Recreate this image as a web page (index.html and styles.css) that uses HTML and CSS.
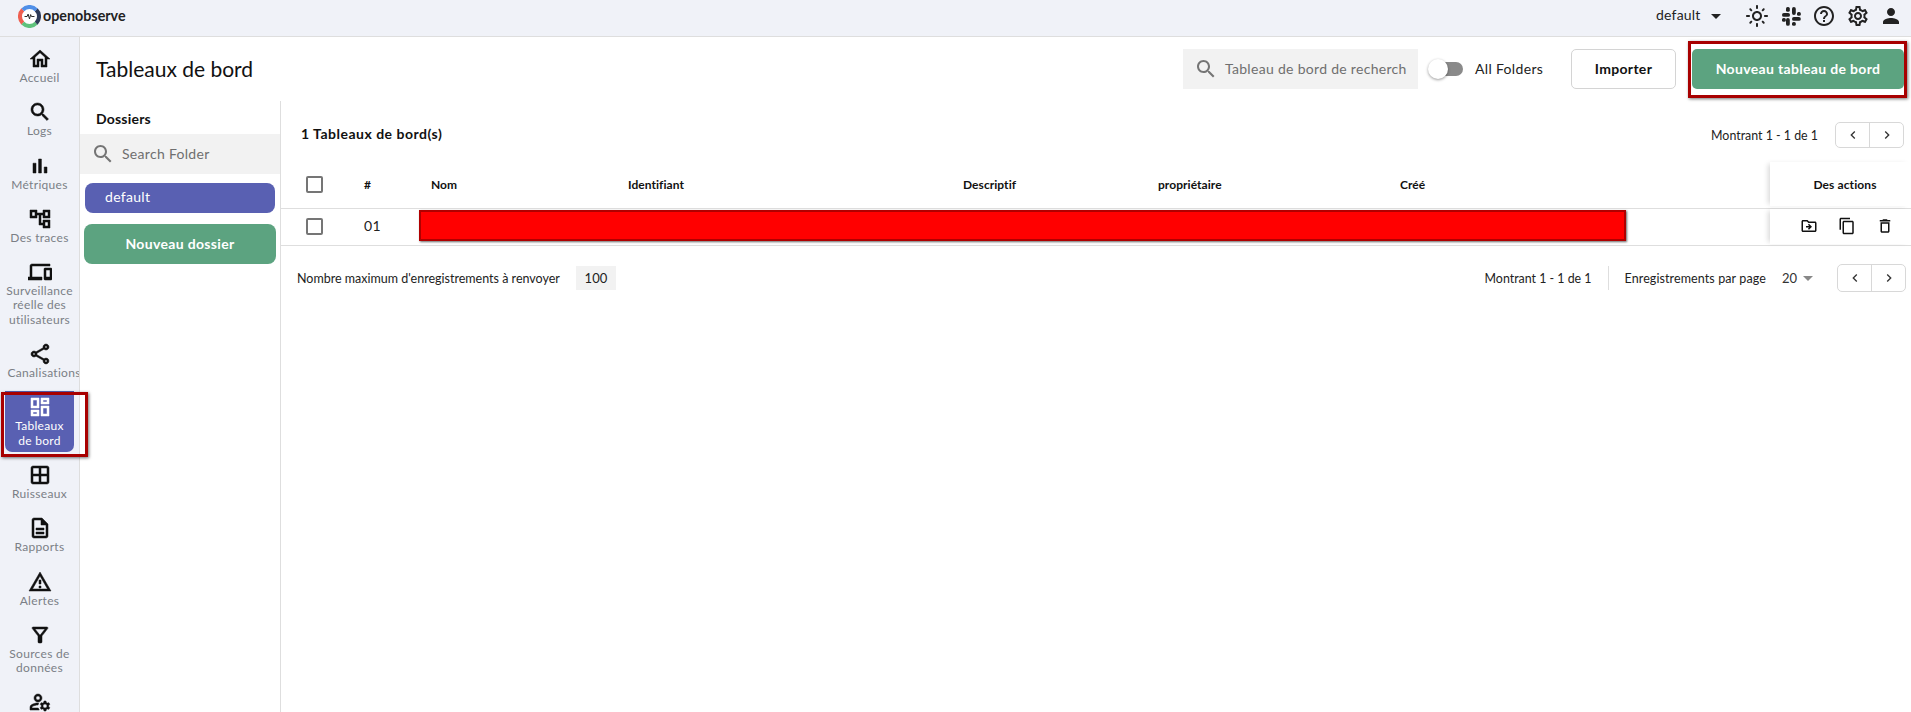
FILE: index.html
```html
<!DOCTYPE html>
<html lang="fr">
<head>
<meta charset="utf-8">
<title>Tableaux de bord</title>
<link rel="stylesheet" href="styles.css">
</head>
<body>
<header class="topbar">
  <div class="logo">
    <svg class="logo-mark" viewBox="0 0 24 24" width="24" height="24">
      <circle cx="12" cy="12" r="9.8" fill="#fff"/>
      <path d="M5 5A9.8 9.8 0 0 0 5 19" fill="none" stroke="#ef5f50" stroke-width="4.2"/>
      <path d="M5 19A9.8 9.8 0 0 0 19 19" fill="none" stroke="#5ec27c" stroke-width="4.2"/>
      <path d="M19 19A9.8 9.8 0 0 0 19 5" fill="none" stroke="#2d3a57" stroke-width="4.2"/>
      <path d="M19 5A9.8 9.8 0 0 0 5 5" fill="none" stroke="#4f8fe8" stroke-width="4.2"/>
      <path d="M6.8 12H9.5L10.5 9.5L12 14.5L13.2 10L14 12H17.2" fill="none" stroke="#222" stroke-width="1"/>
    </svg>
    <span class="logo-text">openobserve</span>
  </div>
  <div class="top-right">
    <span class="org">default</span>
    <span class="caret"></span>
    <svg class="ti sun" viewBox="0 0 24 24"><path d="M12 9c1.65 0 3 1.35 3 3s-1.35 3-3 3-3-1.35-3-3 1.35-3 3-3m0-2c-2.76 0-5 2.24-5 5s2.24 5 5 5 5-2.24 5-5-2.24-5-5-5zM2 13h2c.55 0 1-.45 1-1s-.45-1-1-1H2c-.55 0-1 .45-1 1s.45 1 1 1zm18 0h2c.55 0 1-.45 1-1s-.45-1-1-1h-2c-.55 0-1 .45-1 1s.45 1 1 1zM11 2v2c0 .55.45 1 1 1s1-.45 1-1V2c0-.55-.45-1-1-1s-1 .45-1 1zm0 18v2c0 .55.45 1 1 1s1-.45 1-1v-2c0-.55-.45-1-1-1s-1 .45-1 1zM5.99 4.58c-.39-.39-1.03-.39-1.41 0-.39.39-.39 1.03 0 1.41l1.06 1.06c.39.39 1.03.39 1.41 0s.39-1.03 0-1.41L5.99 4.58zm12.37 12.37c-.39-.39-1.03-.39-1.41 0-.39.39-.39 1.03 0 1.41l1.06 1.06c.39.39 1.03.39 1.41 0 .39-.39.39-1.03 0-1.41l-1.06-1.06zm1.06-10.96c.39-.39.39-1.03 0-1.41-.39-.39-1.03-.39-1.41 0l-1.06 1.06c-.39.39-.39 1.03 0 1.41s1.03.39 1.41 0l1.06-1.06zM7.05 18.36c.39-.39.39-1.03 0-1.41-.39-.39-1.03-.39-1.41 0l-1.06 1.06c-.39.39-.39 1.03 0 1.41s1.03.39 1.41 0l1.06-1.06z"/></svg>
    <svg class="ti slack" viewBox="0 0 24 24"><rect x="3" y="9" width="8" height="3.8" rx="1.9"/><rect x="7" y="3" width="3.8" height="4.8" rx="1.6"/><rect x="13" y="3" width="3.8" height="8" rx="1.9"/><rect x="18" y="8" width="3.8" height="3.8" rx="1.5"/><rect x="13" y="13" width="8.8" height="3.8" rx="1.9"/><rect x="13" y="18" width="3.8" height="3.8" rx="1.5"/><rect x="7" y="14" width="3.8" height="7.8" rx="1.9"/><rect x="3" y="14" width="3.8" height="3.8" rx="1.5"/></svg>
    <svg class="ti help" viewBox="0 0 24 24"><path d="M11 18h2v-2h-2v2zm1-16C6.48 2 2 6.48 2 12s4.48 10 10 10 10-4.48 10-10S17.52 2 12 2zm0 18c-4.41 0-8-3.59-8-8s3.59-8 8-8 8 3.59 8 8-3.59 8-8 8zm0-14c-2.21 0-4 1.79-4 4h2c0-1.1.9-2 2-2s2 .9 2 2c0 2-3 1.75-3 5h2c0-2.25 3-2.5 3-5 0-2.21-1.79-4-4-4z"/></svg>
    <svg class="ti gear" viewBox="0 0 24 24"><path d="M19.43 12.98c.04-.32.07-.64.07-.98 0-.34-.03-.66-.07-.98l2.11-1.65c.19-.15.24-.42.12-.64l-2-3.46c-.09-.16-.26-.25-.44-.25-.06 0-.12.01-.17.03l-2.49 1c-.52-.4-1.08-.73-1.69-.98l-.38-2.65C14.46 2.18 14.25 2 14 2h-4c-.25 0-.46.18-.49.42l-.38 2.65c-.61.25-1.17.59-1.69.98l-2.49-1c-.06-.02-.12-.03-.18-.03-.17 0-.34.09-.43.25l-2 3.46c-.13.22-.07.49.12.64l2.11 1.65c-.04.32-.07.65-.07.98 0 .33.03.66.07.98l-2.11 1.65c-.19.15-.24.42-.12.64l2 3.46c.09.16.26.25.44.25.06 0 .12-.01.17-.03l2.49-1c.52.4 1.08.73 1.69.98l.38 2.65c.03.24.24.42.49.42h4c.25 0 .46-.18.49-.42l.38-2.65c.61-.25 1.17-.59 1.69-.98l2.49 1c.06.02.12.03.18.03.17 0 .34-.09.43-.25l2-3.46c.12-.22.07-.49-.12-.64l-2.11-1.65zm-1.98-1.71c.04.31.05.52.05.73 0 .21-.02.43-.05.73l-.14 1.13.89.7 1.08.84-.7 1.21-1.27-.51-1.04-.42-.9.68c-.43.32-.84.56-1.25.73l-1.06.43-.16 1.13-.2 1.35h-1.4l-.19-1.35-.16-1.13-1.06-.43c-.43-.18-.83-.41-1.23-.71l-.91-.7-1.06.43-1.27.51-.7-1.21 1.08-.84.89-.7-.14-1.13c-.03-.31-.05-.54-.05-.74s.02-.43.05-.73l.14-1.13-.89-.7-1.08-.84.7-1.21 1.27.51 1.04.42.9-.68c.43-.32.84-.56 1.25-.73l1.06-.43.16-1.13.2-1.35h1.39l.19 1.35.16 1.13 1.06.43c.43.18.83.41 1.23.71l.91.7 1.06-.43 1.27-.51.7 1.21-1.07.85-.89.7.14 1.13zM12 8c-2.21 0-4 1.79-4 4s1.79 4 4 4 4-1.79 4-4-1.79-4-4-4zm0 6c-1.1 0-2-.9-2-2s.9-2 2-2 2 .9 2 2-.9 2-2 2z"/></svg>
    <svg class="ti user" viewBox="0 0 24 24"><path d="M12 12c2.21 0 4-1.79 4-4s-1.79-4-4-4-4 1.79-4 4 1.79 4 4 4zm0 2c-2.67 0-8 1.34-8 4v2h16v-2c0-2.66-5.33-4-8-4z"/></svg>
  </div>
</header>

<div class="shell">
  <nav class="sidenav">
    <a class="nav-item"><svg viewBox="0 0 24 24"><path d="M12 5.69l5 4.5V18h-2v-6H9v6H7v-7.81l5-4.5M12 3L2 12h3v8h6v-6h2v6h6v-8h3L12 3z"/></svg><span>Accueil</span></a>
    <a class="nav-item"><svg viewBox="0 0 24 24"><path d="M15.5 14h-.79l-.28-.27C15.41 12.59 16 11.11 16 9.5 16 5.91 13.09 3 9.5 3S3 5.91 3 9.5 5.91 16 9.5 16c1.61 0 3.09-.59 4.23-1.57l.27.28v.79l5 4.99L20.49 19l-4.99-5zm-6 0C7.01 14 5 11.99 5 9.5S7.01 5 9.5 5 14 7.01 14 9.5 11.99 14 9.5 14z"/></svg><span>Logs</span></a>
    <a class="nav-item"><svg viewBox="0 0 24 24"><path d="M5 9.2h3V19H5zM10.6 5h2.8v14h-2.8zm5.6 8H19v6h-2.8z"/></svg><span>Métriques</span></a>
    <a class="nav-item"><svg viewBox="0 0 24 24"><path d="M22 11V3h-7v3H9V3H2v8h7V8h2v10h4v3h7v-8h-7v3h-2V8h2v3h7zM7 9H4V5h3v4zm10 6h3v4h-3v-4zm0-10h3v4h-3V5z"/></svg><span>Des traces</span></a>
    <a class="nav-item"><svg viewBox="0 0 24 24"><path d="M4 6h18V4H4c-1.1 0-2 .9-2 2v11H0v3h14v-3H4V6zm19 2h-6c-.55 0-1 .45-1 1v10c0 .55.45 1 1 1h6c.55 0 1-.45 1-1V9c0-.55-.45-1-1-1zm-1 9h-4v-7h4v7z"/></svg><span>Surveillance réelle des utilisateurs</span></a>
    <a class="nav-item"><svg viewBox="0 0 24 24"><path d="M18 16.08c-.76 0-1.44.3-1.96.77L8.91 12.7c.05-.23.09-.46.09-.7s-.04-.47-.09-.7l7.05-4.11c.54.5 1.25.81 2.04.81 1.66 0 3-1.34 3-3s-1.34-3-3-3-3 1.34-3 3c0 .24.04.47.09.7L8.04 9.81C7.5 9.31 6.79 9 6 9c-1.66 0-3 1.34-3 3s1.34 3 3 3c.79 0 1.5-.31 2.04-.81l7.12 4.16c-.05.21-.08.43-.08.65 0 1.61 1.31 2.92 2.92 2.92s2.92-1.31 2.92-2.92c0-1.61-1.31-2.92-2.92-2.92zM18 4c.55 0 1 .45 1 1s-.45 1-1 1-1-.45-1-1 .45-1 1-1zM6 13c-.55 0-1-.45-1-1s.45-1 1-1 1 .45 1 1-.45 1-1 1zm12 7.02c-.55 0-1-.45-1-1s.45-1 1-1 1 .45 1 1-.45 1-1 1z"/></svg><span class="nowrap">Canalisations</span></a>
    <a class="nav-item active"><svg viewBox="0 0 24 24"><path d="M19 5v2h-4V5h4M9 5v6H5V5h4m10 8v6h-4v-6h4M9 17v2H5v-2h4M21 3h-8v6h8V3zM11 3H3v10h8V3zm10 8h-8v10h8V11zm-10 4H3v6h8v-6z"/></svg><span>Tableaux<br>de bord</span></a>
    <a class="nav-item"><svg viewBox="0 0 24 24"><path d="M19 3H5c-1.1 0-2 .9-2 2v14c0 1.1.9 2 2 2h14c1.1 0 2-.9 2-2V5c0-1.1-.9-2-2-2zm0 2v6h-6V5h6zM11 5v6H5V5h6zM5 19v-6h6v6H5zm8 0v-6h6v6h-6z"/></svg><span>Ruisseaux</span></a>
    <a class="nav-item"><svg viewBox="0 0 24 24"><path d="M8 16h8v2H8zm0-4h8v2H8zm6-10H6c-1.1 0-2 .9-2 2v16c0 1.1.89 2 1.99 2H18c1.1 0 2-.9 2-2V8l-6-6zm4 18H6V4h7v5h5v11z"/></svg><span>Rapports</span></a>
    <a class="nav-item"><svg viewBox="0 0 24 24"><path d="M12 5.99L19.53 19H4.47L12 5.99M12 2L1 21h22L12 2zm1 14h-2v2h2v-2zm0-6h-2v4h2v-4z"/></svg><span>Alertes</span></a>
    <a class="nav-item"><svg viewBox="0 0 24 24"><path d="M7 6h10l-5.01 6.3L7 6zm-2.75-.39C6.27 8.2 10 13 10 13v6c0 .55.45 1 1 1h2c.55 0 1-.45 1-1v-6s3.73-4.8 5.75-7.39C20.26 4.95 19.79 4 18.95 4H5.04c-.83 0-1.3.95-.79 1.61z"/></svg><span>Sources de données</span></a>
    <a class="nav-item"><svg viewBox="0 0 24 24"><path d="M4 18v-.65c0-.34.16-.66.41-.81C6.1 15.53 8.03 15 10 15c.03 0 .05 0 .08.01.1-.7.3-1.37.59-1.98-.22-.02-.44-.03-.67-.03-2.42 0-4.68.67-6.61 1.82-.88.52-1.39 1.5-1.39 2.53V20h9.26c-.42-.6-.75-1.28-.97-2H4zM10 12c2.21 0 4-1.79 4-4s-1.79-4-4-4-4 1.79-4 4 1.79 4 4 4zm0-6c1.1 0 2 .9 2 2s-.9 2-2 2-2-.9-2-2 .9-2 2-2z"/><path d="M20.75 16c0-.22-.03-.42-.06-.63l1.14-1.01-1-1.73-1.45.49c-.32-.27-.68-.48-1.08-.63L18 11h-2l-.3 1.49c-.4.15-.76.36-1.08.63l-1.45-.49-1 1.73 1.14 1.01c-.03.21-.06.41-.06.63s.03.42.06.63l-1.14 1.01 1 1.73 1.45-.49c.32.27.68.48 1.08.63L16 21h2l.3-1.49c.4-.15.76-.36 1.08-.63l1.45.49 1-1.73-1.14-1.01c.03-.21.06-.41.06-.63zM17 18c-1.1 0-2-.9-2-2s.9-2 2-2 2 .9 2 2-.9 2-2 2z"/></svg></a>
  </nav>

  <main class="main">
    <div class="title-row">
      <h1 class="title">Tableaux de bord</h1>
      <div class="title-tools">
        <div class="search search-wide">
          <svg class="search-icon" viewBox="0 0 24 24"><path d="M15.5 14h-.79l-.28-.27C15.41 12.59 16 11.11 16 9.5 16 5.91 13.09 3 9.5 3S3 5.91 3 9.5 5.91 16 9.5 16c1.61 0 3.09-.59 4.23-1.57l.27.28v.79l5 4.99L20.49 19l-4.99-5zm-6 0C7.01 14 5 11.99 5 9.5S7.01 5 9.5 5 14 7.01 14 9.5 11.99 14 9.5 14z"/></svg>
          <span>Tableau de bord de recherch</span>
        </div>
        <div class="toggle"><span class="toggle-track"></span><span class="toggle-ball"></span></div>
        <span class="toggle-label">All Folders</span>
        <button class="btn btn-outline">Importer</button>
        <button class="btn btn-green btn-new">Nouveau tableau de bord</button>
      </div>
    </div>

    <div class="body-row">
      <aside class="folders">
        <div class="folders-title">Dossiers</div>
        <div class="search search-folder">
          <svg class="search-icon" viewBox="0 0 24 24"><path d="M15.5 14h-.79l-.28-.27C15.41 12.59 16 11.11 16 9.5 16 5.91 13.09 3 9.5 3S3 5.91 3 9.5 5.91 16 9.5 16c1.61 0 3.09-.59 4.23-1.57l.27.28v.79l5 4.99L20.49 19l-4.99-5zm-6 0C7.01 14 5 11.99 5 9.5S7.01 5 9.5 5 14 7.01 14 9.5 11.99 14 9.5 14z"/></svg>
          <span>Search Folder</span>
        </div>
        <div class="folder-item">default</div>
        <button class="btn btn-green btn-folder">Nouveau dossier</button>
      </aside>

      <section class="list">
        <div class="list-head">
          <strong class="count">1 Tableaux de bord(s)</strong>
          <div class="pager">
            <span class="pager-text">Montrant 1 - 1 de 1</span>
            <div class="pager-btns">
              <span><svg viewBox="0 0 24 24"><path d="M15.41 7.41L14 6l-6 6 6 6 1.41-1.41L10.83 12z"/></svg></span>
              <span><svg viewBox="0 0 24 24"><path d="M10 6L8.59 7.41 13.17 12l-4.58 4.59L10 18l6-6z"/></svg></span>
            </div>
          </div>
        </div>

        <div class="table">
          <div class="tr th">
            <div class="c c-check"><i class="checkbox"></i></div>
            <div class="c">#</div>
            <div class="c">Nom</div>
            <div class="c">Identifiant</div>
            <div class="c">Descriptif</div>
            <div class="c">propriétaire</div>
            <div class="c">Créé</div>
            <div class="c c-actions c-actions-head">Des actions</div>
          </div>
          <div class="tr td">
            <div class="c c-check"><i class="checkbox"></i></div>
            <div class="c c-num">01</div>
            <div class="c"></div>
            <div class="c"></div>
            <div class="c"></div>
            <div class="c"></div>
            <div class="c"></div>
            <div class="c c-actions c-icons">
              <svg viewBox="0 0 24 24"><path d="M20 6h-8l-2-2H4c-1.1 0-1.99.9-1.99 2L2 18c0 1.1.9 2 2 2h16c1.1 0 2-.9 2-2V8c0-1.1-.9-2-2-2zm0 12H4V6h5.17l2 2H20v10zm-8.01-9l-1.41 1.41L12.16 12H8v2h4.16l-1.59 1.59L11.99 17 16 13.01 11.99 9z"/></svg>
              <svg viewBox="0 0 24 24"><path d="M16 1H4c-1.1 0-2 .9-2 2v14h2V3h12V1zm3 4H8c-1.1 0-2 .9-2 2v14c0 1.1.9 2 2 2h11c1.1 0 2-.9 2-2V7c0-1.1-.9-2-2-2zm0 16H8V7h11v14z"/></svg>
              <svg viewBox="0 0 24 24"><path d="M6 19c0 1.1.9 2 2 2h8c1.1 0 2-.9 2-2V7H6v12zM8 9h8v10H8V9zm7.5-5l-1-1h-5l-1 1H5v2h14V4z"/></svg>
            </div>
          </div>
          <div class="redact"></div>
        </div>

        <div class="list-foot">
          <span class="max-label">Nombre maximum d'enregistrements à renvoyer</span>
          <span class="max-value">100</span>
          <div class="foot-right">
            <span class="pager-text">Montrant 1 - 1 de 1</span>
            <span class="foot-sep"></span>
            <span class="pager-text wide">Enregistrements par page</span>
            <span class="per-page">20</span>
            <span class="caret caret-grey"></span>
            <div class="pager-btns pager-btns-foot">
              <span><svg viewBox="0 0 24 24"><path d="M15.41 7.41L14 6l-6 6 6 6 1.41-1.41L10.83 12z"/></svg></span>
              <span><svg viewBox="0 0 24 24"><path d="M10 6L8.59 7.41 13.17 12l-4.58 4.59L10 18l6-6z"/></svg></span>
            </div>
          </div>
        </div>
      </section>
    </div>
  </main>
</div>

<div class="callout callout-nav"></div>
<div class="callout callout-new"></div>
</body>
</html>
```
FILE: styles.css
```css
* { box-sizing: border-box; }
html, body { height: 712px; overflow: hidden; }
body { margin: 0; font-family: "Lato", "Noto Sans", sans-serif; font-size: 14px; color: #111; background: #fff; position: relative; }
svg { fill: currentColor; display: block; }

.topbar { height: 37px; padding-bottom: 4px; background: #f0f2f8; border-bottom: 1px solid #dedede; display: flex; align-items: center; justify-content: space-between; }
.logo { display: flex; align-items: center; padding-left: 18px; }
.logo-mark { width: 23px; height: 23px; margin-right: 2px; }
.logo-text { font-family: "Lato", sans-serif; font-size: 14.3px; font-weight: 700; color: #222; margin-bottom: 2px; }
.top-right { display: flex; align-items: center; padding-right: 8px; }
.org { font-size: 14px; color: #222; width: 55px; letter-spacing: .2px; margin-bottom: 3px; }
.caret { width: 0; height: 0; border-left: 5px solid transparent; border-right: 5px solid transparent; border-top: 5px solid #222; }
.ti { width: 24px; height: 24px; color: #222; margin-left: 9.5px; }
.sun { margin-left: 24px; }

.shell { display: flex; height: 675px; }
.sidenav { width: 80px; flex: none; display: flex; flex-direction: column; background: #f0f2f8; border-right: 1px solid #dedede; padding-top: 2.5px; overflow: hidden; }
.nav-item { flex: none; display: flex; flex-direction: column; align-items: center; margin: 3.5px 5px; padding: 4px 2.5px; color: #7b7f86; font-size: 12px; line-height: 14.3px; text-align: center; letter-spacing: .3px; }
.nav-item svg { width: 24px; height: 24px; color: #111; flex: none; stroke: currentColor; stroke-width: .5; }
.nav-item .nowrap { white-space: nowrap; align-self: flex-start; }
.nav-item.active { background: #5960b2; color: #fff; border-radius: 0 0 7px 7px; }
.nav-item.active svg { color: #fff; }

.main { flex: 1; min-width: 0; display: flex; flex-direction: column; }
.title-row { height: 64px; flex: none; display: flex; align-items: center; justify-content: space-between; padding: 0 7px 0 16px; }
.title { margin: 0 0 2px; font-size: 21px; font-weight: 400; color: #111; }
.title-tools { display: flex; align-items: center; height: 40px; }
.search { display: flex; align-items: center; background: #f2f2f2; color: #6f6f6f; height: 40px; letter-spacing: .3px; }
.search-icon { width: 24px; height: 24px; color: #757575; flex: none; }
.search-wide { width: 235px; padding-left: 11px; }
.search-wide span { margin: 0 0 2px 7px; white-space: nowrap; }
.toggle { position: relative; width: 35px; height: 20px; margin-left: 10px; }
.toggle-track { position: absolute; left: 7px; right: 0; top: 3px; height: 14px; background: #8a8a8a; border-radius: 7px; }
.toggle-ball { position: absolute; left: 0; top: 0; width: 20px; height: 20px; background: #fff; border-radius: 50%; box-shadow: 0 1px 3px rgba(0,0,0,.4); }
.toggle-label { margin: 0 0 2px 12px; width: 96px; color: #222; letter-spacing: .33px; }
.btn { font-family: inherit; font-size: 14px; font-weight: 700; height: 40px; padding: 0 0 2px; border-radius: 5px; cursor: pointer; letter-spacing: .33px; }
.btn-outline { width: 105px; background: #fff; color: #111; border: 1px solid #d4d4d4; }
.btn-green { background: #5ca380; color: #fff; border: 0; }
.btn-new { width: 212px; margin-left: 16px; }

.body-row { flex: 1; display: flex; min-height: 0; }
.folders { width: 201px; flex: none; border-right: 1px solid #dedede; }
.folders-title { height: 33px; padding: 9px 0 0 16px; font-weight: 700; line-height: 18px; letter-spacing: .2px; }
.search-folder { width: 200px; padding-left: 11px; }
.search-folder span { margin: 0 0 2px 7px; }
.folder-item { height: 30px; margin: 9px 5px 0; padding-left: 20px; line-height: 27px; background: #5960b2; color: #fff; border-radius: 8px; letter-spacing: .3px; }
.btn-folder { display: block; width: 192px; margin: 11px 0 0 4px; border-radius: 8px; }

.list { flex: 1; min-width: 0; }
.list-head { height: 61px; padding: 21px 7px 0 20px; display: flex; justify-content: space-between; align-items: flex-start; }
.count { line-height: 24px; letter-spacing: .5px; }
.pager { display: flex; align-items: center; height: 26px; }
.pager-text { font-size: 12.4px; color: #222; white-space: nowrap; }
.pager-text.wide { font-size: 12.5px; letter-spacing: .1px; }
.pager-btns { display: flex; width: 69px; height: 26px; margin-left: 17px; border: 1px solid #d8d8d8; border-radius: 5px; }
.pager-btns span { flex: 1; display: flex; align-items: center; justify-content: center; color: #333; }
.pager-btns span + span { border-left: 1px solid #d8d8d8; }
.pager-btns svg { width: 16px; height: 16px; }
.pager-btns-foot { height: 28px; margin-left: 24px; }

.table { position: relative; }
.tr { display: grid; grid-template-columns: 83px 67px 197px 335px 195px 242px 370px 141px; align-items: center; border-bottom: 1px solid #dedede; }
.th { height: 47px; padding-bottom: 2px; font-size: 12px; font-weight: 700; letter-spacing: .05px; }
.td { height: 37px; padding-bottom: 1px; font-size: 14px; color: #222; }
.c-num { padding-bottom: 3px; letter-spacing: .3px; }
.c-check { padding-left: 25px; }
.checkbox { display: block; width: 17px; height: 17px; border: 2px solid #757575; border-radius: 2px; }
.c-actions { align-self: stretch; display: flex; align-items: center; justify-content: center; box-shadow: -4px 0 5px -2px rgba(0,0,0,.15); }
.c-actions-head { padding-left: 9px; letter-spacing: .1px; }
.c-icons { justify-content: flex-start; padding: 0 0 1px 30px; gap: 20px; }
.c-icons svg { width: 18px; height: 18px; color: #111; }
.redact { position: absolute; left: 138px; top: 48px; width: 1207px; height: 31px; background: #f00; border: 2px solid #b00000; box-shadow: 1px 1px 2px rgba(0,0,0,.6); }

.list-foot { display: flex; align-items: center; height: 24px; margin-top: 20px; padding: 0 5px 0 16px; }
.max-label { font-size: 12.5px; color: #222; }
.max-value { width: 40px; height: 24px; line-height: 24px; margin-left: 16px; background: #f2f2f2; text-align: center; font-size: 13px; color: #222; }
.foot-right { margin-left: auto; display: flex; align-items: center; }
.foot-sep { width: 1px; height: 24px; background: #dedede; margin: 0 16px; }
.per-page { margin-left: 16px; font-size: 13px; color: #333; }
.caret-grey { margin-left: 6px; border-top-color: #888; }

.callout { position: absolute; border: 3px solid #a80000; box-shadow: 1px 1px 3px rgba(0,0,0,.55); pointer-events: none; }
.callout-nav { left: 1px; top: 392px; width: 87px; height: 65px; }
.callout-new { left: 1688px; top: 41px; width: 219px; height: 57px; }
```
